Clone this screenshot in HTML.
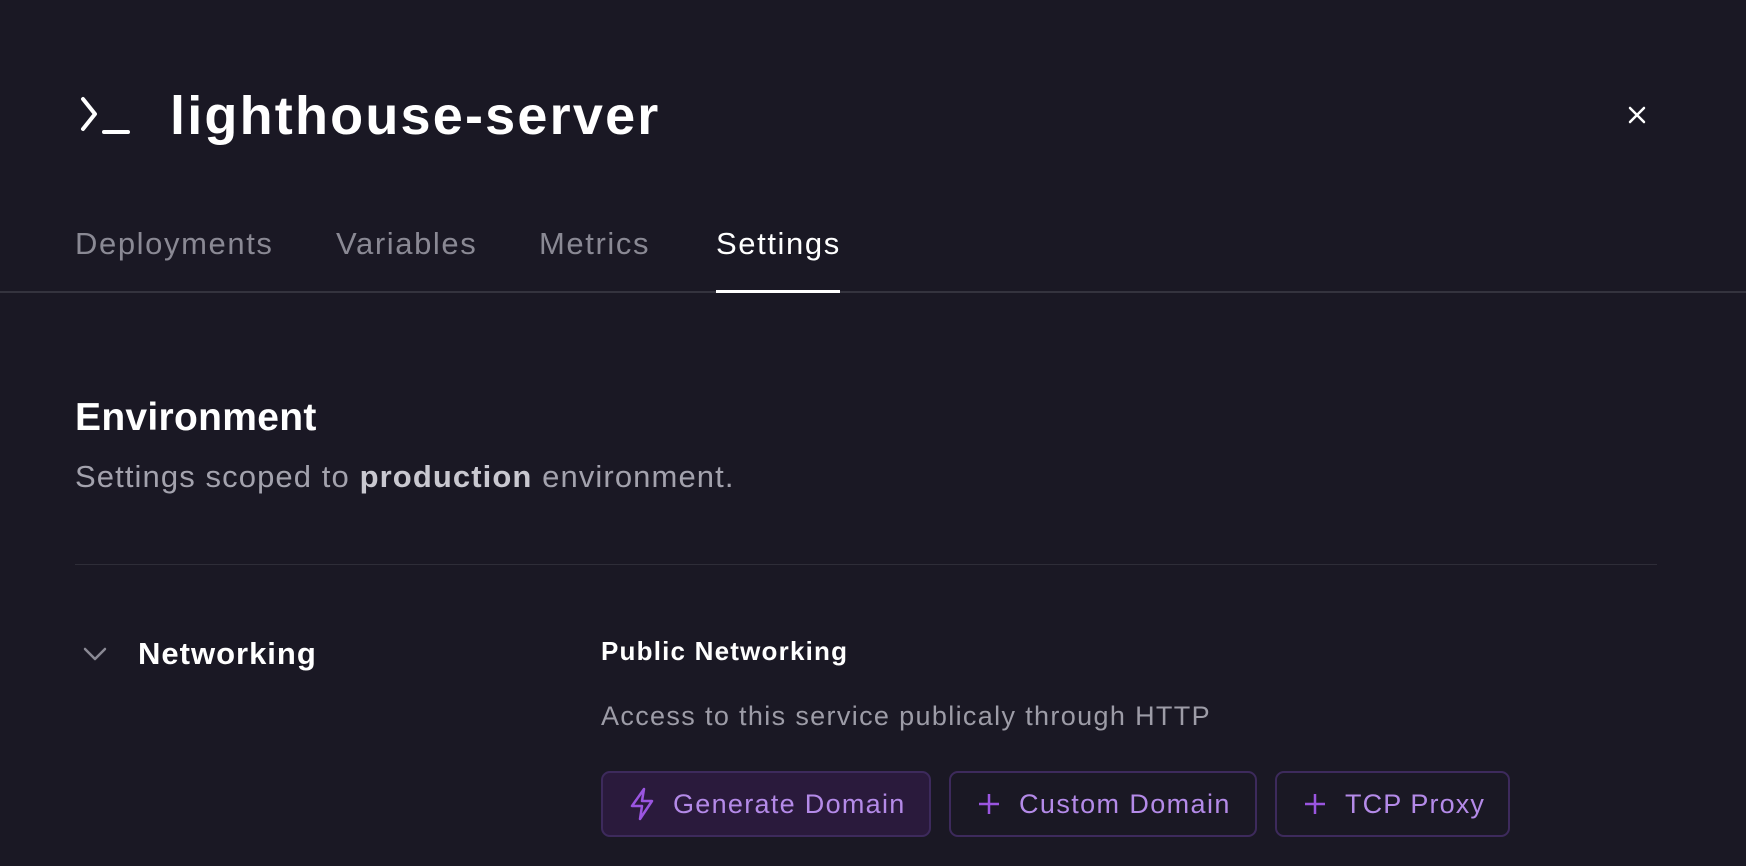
<!DOCTYPE html>
<html><head><style>
*{margin:0;padding:0;box-sizing:border-box}
body{width:1746px;height:866px;background:#1a1824;font-family:"Liberation Sans",sans-serif;position:relative;overflow:hidden;color:#fff}
.a{position:absolute;white-space:nowrap}
.tab{font-size:31px;color:#8a8994;top:226px;letter-spacing:1.6px}
.btn{position:absolute;top:771px;height:66px;border:2px solid #3d2a5c;border-radius:9px;color:#b48ae8;font-size:27px;display:flex;align-items:center;padding-left:26px;letter-spacing:1.3px}
.btn svg{margin-right:18px}
</style></head><body>
<svg class="a" style="left:78px;top:94px" width="56" height="44" viewBox="0 0 56 44"><path d="M5 5 L17 20 L5 35" stroke="#fff" stroke-width="4" fill="none" stroke-linecap="round" stroke-linejoin="round"/><path d="M26 38 H50" stroke="#fff" stroke-width="4" stroke-linecap="round"/></svg>
<div class="a" style="left:170px;top:85px;font-size:54px;font-weight:bold;letter-spacing:2.2px">lighthouse-server</div>
<svg class="a" style="left:1628px;top:106px" width="18" height="18" viewBox="0 0 18 18"><path d="M2 2 L16 16 M16 2 L2 16" stroke="#fff" stroke-width="2.5" stroke-linecap="round"/></svg>
<div class="a tab" style="left:75px">Deployments</div>
<div class="a tab" style="left:336px">Variables</div>
<div class="a tab" style="left:539px">Metrics</div>
<div class="a tab" style="left:716px;color:#fff">Settings</div>
<div class="a" style="left:0;top:291px;width:1746px;height:2px;background:#34333e"></div>
<div class="a" style="left:716px;top:290px;width:124px;height:3px;background:#fff"></div>
<div class="a" style="left:75px;top:396px;font-size:39px;font-weight:bold;letter-spacing:0.3px">Environment</div>
<div class="a" style="left:75px;top:459px;font-size:31px;color:#a3a2ad;letter-spacing:1.1px">Settings scoped to <b style="color:#c9c8d0">production</b> environment.</div>
<div class="a" style="left:75px;top:564px;width:1582px;height:1px;background:#2e2d38"></div>
<svg class="a" style="left:82px;top:646px" width="26" height="16" viewBox="0 0 26 16"><path d="M3 3 L13 13 L23 3" stroke="#8a8994" stroke-width="2.5" fill="none" stroke-linecap="round" stroke-linejoin="round"/></svg>
<div class="a" style="left:138px;top:636px;font-size:31px;font-weight:bold;letter-spacing:1px">Networking</div>
<div class="a" style="left:601px;top:636px;font-size:26px;font-weight:bold;letter-spacing:1.2px">Public Networking</div>
<div class="a" style="left:601px;top:701px;font-size:27px;color:#9d9ca7;letter-spacing:1.35px">Access to this service publicaly through HTTP</div>
<div class="btn" style="left:601px;width:330px;background:#2a1a3c"><svg width="26" height="34" viewBox="0 0 26 34"><path d="M15 2 L3 19 H13 L11 32 L23 14 H13 Z" stroke="#9a55e0" stroke-width="2.5" fill="none" stroke-linejoin="round"/></svg>Generate Domain</div>
<div class="btn" style="left:949px;width:308px;letter-spacing:1.4px"><svg width="24" height="24" viewBox="0 0 24 24"><path d="M12 2 V22 M2 12 H22" stroke="#9a55e0" stroke-width="2.5"/></svg>Custom Domain</div>
<div class="btn" style="left:1275px;width:235px;letter-spacing:1.1px"><svg width="24" height="24" viewBox="0 0 24 24"><path d="M12 2 V22 M2 12 H22" stroke="#9a55e0" stroke-width="2.5"/></svg>TCP Proxy</div>
</body></html>
